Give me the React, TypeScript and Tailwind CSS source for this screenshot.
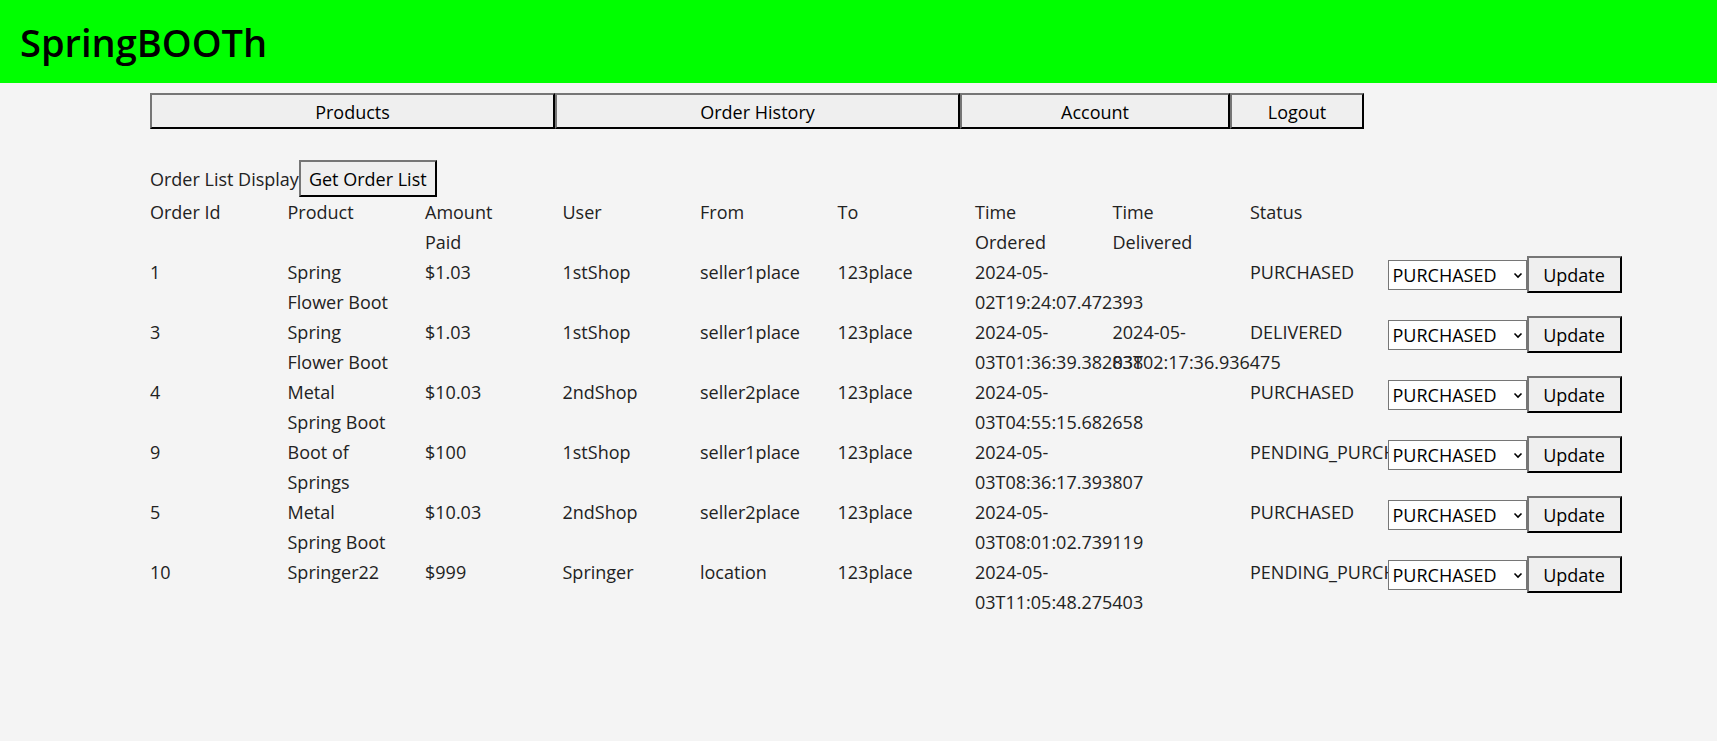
import React from 'react';

type Order = {
  id: string;
  product: string;
  amount: string;
  user: string;
  from: string;
  to: string;
  ordered: string;
  delivered: string;
  status: string;
};

const orders: Order[] = [
  { id: '1', product: 'Spring Flower Boot', amount: '$1.03', user: '1stShop', from: 'seller1place', to: '123place', ordered: '2024-05-02T19:24:07.472393', delivered: '', status: 'PURCHASED' },
  { id: '3', product: 'Spring Flower Boot', amount: '$1.03', user: '1stShop', from: 'seller1place', to: '123place', ordered: '2024-05-03T01:36:39.382838', delivered: '2024-05-03T02:17:36.936475', status: 'DELIVERED' },
  { id: '4', product: 'Metal Spring Boot', amount: '$10.03', user: '2ndShop', from: 'seller2place', to: '123place', ordered: '2024-05-03T04:55:15.682658', delivered: '', status: 'PURCHASED' },
  { id: '9', product: 'Boot of Springs', amount: '$100', user: '1stShop', from: 'seller1place', to: '123place', ordered: '2024-05-03T08:36:17.393807', delivered: '', status: 'PENDING_PURCHASE' },
  { id: '5', product: 'Metal Spring Boot', amount: '$10.03', user: '2ndShop', from: 'seller2place', to: '123place', ordered: '2024-05-03T08:01:02.739119', delivered: '', status: 'PURCHASED' },
  { id: '10', product: 'Springer22', amount: '$999', user: 'Springer', from: 'location', to: '123place', ordered: '2024-05-03T11:05:48.275403', delivered: '', status: 'PENDING_PURCHASE' },
];

const headers = ['Order Id', 'Product', 'Amount Paid', 'User', 'From', 'To', 'Time Ordered', 'Time Delivered', 'Status'];

const btn =
  'bg-[#efefef] border-2 border-t-[#767676] border-l-[#767676] border-r-black border-b-black text-black';

function Cell({ children }: { children?: React.ReactNode }) {
  return <div className="w-[137.5px] shrink-0 pr-[35px] whitespace-normal">{children}</div>;
}

export default function App() {
  return (
    <div className="min-h-[741px] bg-[#f4f4f4] text-[#222] font-['Open_Sans',sans-serif] text-[18px] leading-[30px]">
      <div className="h-[83px] bg-[#00ff00] flex items-center pl-[20px]">
        <h1 className="text-[38px] font-semibold text-black leading-none">SpringBOOTh</h1>
      </div>

      <div className="ml-[150px] mt-[10px] flex h-[36px] text-black">
        <button className={`${btn} w-[405px] pt-[2px]`}>Products</button>
        <button className={`${btn} w-[405px] pt-[2px]`}>Order History</button>
        <button className={`${btn} w-[270px] pt-[2px]`}>Account</button>
        <button className={`${btn} w-[134px] pt-[2px]`}>Logout</button>
      </div>

      <div className="ml-[150px] mt-[31px] flex items-center h-[37px]">
        <span>Order List Display</span>
        <button className={`${btn} h-[37px] px-[8px]`}>Get Order List</button>
      </div>

      <div className="ml-[150px]">
        <div className="flex">
          {headers.map((h) => (
            <Cell key={h}>{h}</Cell>
          ))}
        </div>
        {orders.map((o) => (
          <div key={o.id} className="flex h-[60px]">
            <Cell>{o.id}</Cell>
            <Cell>{o.product}</Cell>
            <Cell>{o.amount}</Cell>
            <Cell>{o.user}</Cell>
            <Cell>{o.from}</Cell>
            <Cell>{o.to}</Cell>
            <Cell>{o.ordered}</Cell>
            <Cell>{o.delivered}</Cell>
            <Cell>{o.status}</Cell>
            <div className="relative flex items-center h-[37px] mt-[-1px]">
              <div className="flex items-center justify-between w-[139px] h-[30px] bg-white border border-[#767676] pl-[4px] pr-[3px] text-black">
                <span>PURCHASED</span>
                <svg width="10" height="7" viewBox="0 0 10 7" className="mt-[1px]">
                  <path d="M1.5 1.5 L5 5 L8.5 1.5" fill="none" stroke="black" strokeWidth="1.6" />
                </svg>
              </div>
              <button className={`${btn} w-[95px] h-[37px]`}>Update</button>
            </div>
          </div>
        ))}
      </div>
    </div>
  );
}
